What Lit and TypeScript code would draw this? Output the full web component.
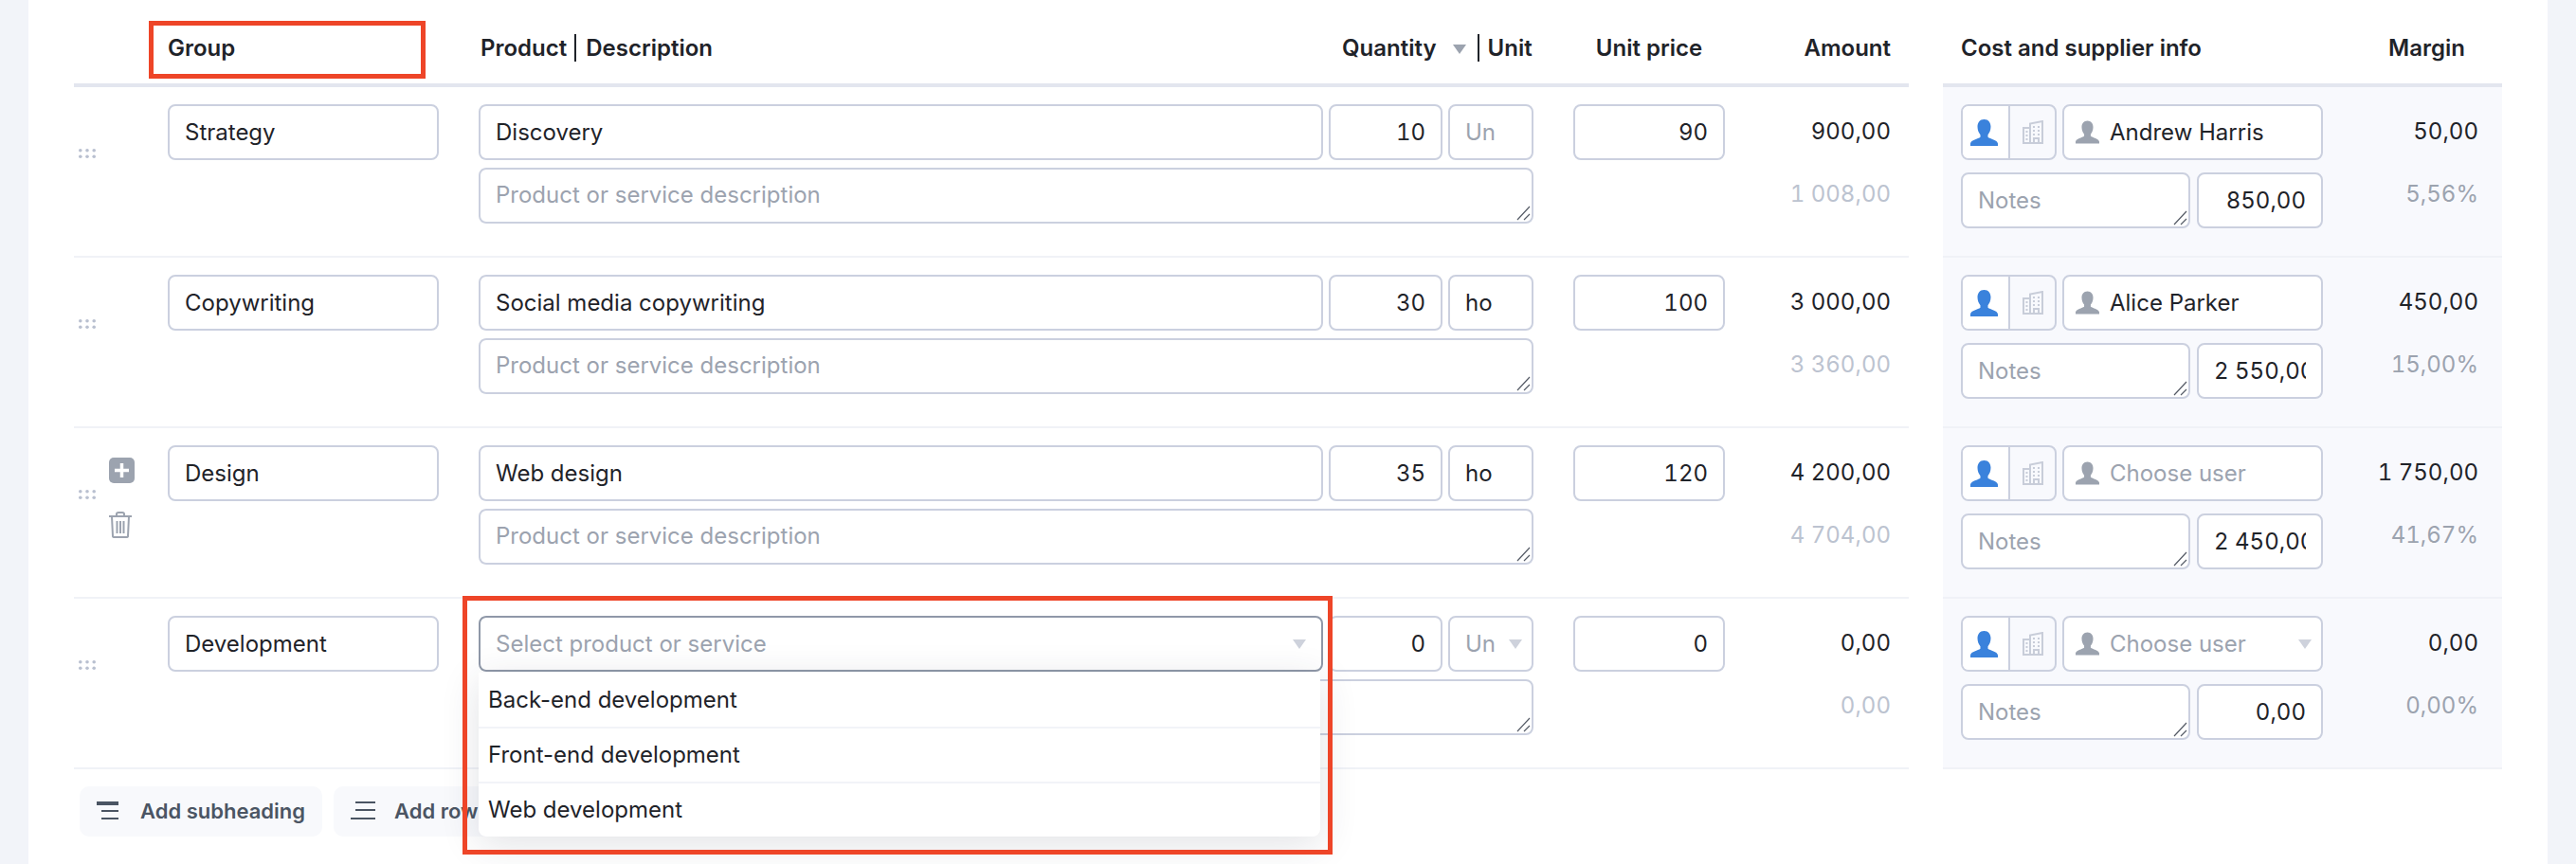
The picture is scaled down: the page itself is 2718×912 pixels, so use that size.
import { LitElement, html, css, svg } from "lit";
import { customElement } from "lit/decorators.js";
import { classMap } from "lit/directives/class-map.js";

const person = (cls: string, w: number, h: number) => html`<svg class=${cls} width=${w} height=${h} viewBox="0 0 29 28"><path fill="currentColor" d="M14.500 0c4.600 0 7 3.500 7 7.800 0 3.700-1.400 6.600-3 8.400v2.600c2.300 1.800 10 3 10.500 6.700V28H0v-2.500c.5-3.700 8.200-4.900 10.500-6.700v-2.600c-1.600-1.800-3-4.700-3-8.400 0-4.300 2.400-7.800 7-7.800z"/></svg>`;

const building = html`<svg class="bld" width="22" height="25" viewBox="0 0 22 25"><path fill="none" stroke="currentColor" stroke-width="2" d="M8 24V3.500L21 1v23zM8 8H1v16h7"/><path fill="none" stroke="currentColor" stroke-width="2" d="M11 7h2M16 7h2M11 11h2M16 11h2M11 15h2M16 15h2M3.500 12h2M3.500 16h2M3.500 20h2M12 24v-5h5v5"/></svg>`;

const resizer = html`<svg class="resizer" width="15" height="16" viewBox="0 0 15 16"><path fill="none" stroke="#555b66" stroke-width="1.200" d="M14 1 1 15M14 9 8 15"/></svg>`;

const arrow = (cls: string) => html`<svg class=${cls} width="14" height="10" viewBox="0 0 14 10"><path fill="currentColor" d="M0 0h14L7 10z"/></svg>`;

const dots = html`<svg class="dots" width="18" height="10" viewBox="0 0 18 10"><g fill="currentColor">${[1.800, 9, 16.200].map(x => [1.800, 8.200].map(y => svg`<circle cx=${x} cy=${y} r="1.800"/>`))}</g></svg>`;

interface Row {
  group: string; product: string; qty: string; unit: string; unitPh?: boolean; price: string;
  amount: string; gross: string; user: string; userPh?: boolean; cost: string; margin: string; pct: string;
  actions?: boolean; open?: boolean;
}

const ROWS: Row[] = [
  { group: "Strategy", product: "Discovery", qty: "10", unit: "Un", unitPh: true, price: "90", amount: "900,00", gross: "1 008,00", user: "Andrew Harris", cost: "850,00", margin: "50,00", pct: "5,56%" },
  { group: "Copywriting", product: "Social media copywriting", qty: "30", unit: "ho", price: "100", amount: "3 000,00", gross: "3 360,00", user: "Alice Parker", cost: "2 550,00", margin: "450,00", pct: "15,00%" },
  { group: "Design", product: "Web design", qty: "35", unit: "ho", price: "120", amount: "4 200,00", gross: "4 704,00", user: "Choose user", userPh: true, cost: "2 450,00", margin: "1 750,00", pct: "41,67%", actions: true },
  { group: "Development", product: "", qty: "0", unit: "Un", unitPh: true, price: "0", amount: "0,00", gross: "0,00", user: "Choose user", userPh: true, cost: "0,00", margin: "0,00", pct: "0,00%", open: true },
];

@customElement("app-root")
export class AppRoot extends LitElement {
  static styles = css`
    :host { display: block; width: 2718px; height: 912px; overflow: hidden; background: #f2f4f9;
      font-family: Inter, "Noto Sans", sans-serif; font-size: 24px; color: #1f2329; }
    .page { position: relative; box-sizing: border-box; width: 2658px; height: 912px; margin-left: 30px;
      padding-left: 48px; background: #fff; }
    .tables { display: flex; gap: 36px; align-items: flex-start; }
    .main { width: 1936px; }
    .side { width: 590px; }
    .head { display: flex; align-items: center; height: 76px; padding-top: 12px; border-bottom: 4px solid #e3e6ef;
      font-weight: 600; white-space: nowrap; }
    .head > div { display: flex; align-items: center; }
    .hcell-group { width: 328px; padding-left: 99px; }
    .hcell-product { width: 911px; padding-left: 2px; box-sizing: border-box; }
    .bar { width: 2px; height: 29px; background: #1f2329; margin: 0 10px 0 8px; }
    .hcell-qty { width: 202px; box-sizing: border-box; }
    .hcell-qty .arr { color: #9ca3af; margin-left: 17px; margin-top: 4px; flex: none; }
    .hcell-qty .bar { margin: 0 9px 0 12px; flex: none; }
    .hcell-price { justify-content: center; margin-left: 42px; width: 160px; }
    .hcell-amount { flex: 1; justify-content: flex-end; padding-right: 19px; }
    .hcell-cost { width: 401px; padding-left: 19px; box-sizing: border-box; }
    .hcell-margin { flex: 1; justify-content: flex-end; padding-right: 39px; }

    .row { display: grid; grid-template-columns: 99px 328px 1155px 202px 1fr; height: 178px;
      border-bottom: 2px solid #f0f2f7; }
    .drag { display: flex; align-items: flex-start; }
    .dots { color: #b9c0d0; margin: 65px 0 0 5px; flex: none; }
    .actions { display: flex; flex-direction: column; align-items: flex-start; gap: 30px; margin: 31px 0 0 14px; color: #9ca3af; }
    .actions svg { display: block; }
    .group { padding-top: 18px; }
    .fld { position: relative; box-sizing: border-box; height: 59px; border: 2px solid #cbd0df; border-radius: 8px; background: #fff;
      padding: 0 16px; display: flex; align-items: center; white-space: nowrap; }
    .fld .t { display: block; flex: 1; min-width: 0; overflow: hidden; line-height: 30px; }
    .num { text-align: right; font-variant-numeric: tabular-nums; }
    .ph { color: #9ca3af; }
    .group .fld { width: 286px; }
    .prod { padding-top: 18px; display: flex; flex-direction: column; gap: 8px; width: 1113px; }
    .prod-line { display: flex; gap: 6px; }
    .f-prod { position: relative; width: 891px; flex: none; }
    .f-prod .fld.sel { border-color: #8f98a8; }
    .f-qty { width: 120px; flex: none; }
    .f-unit { width: 90px; flex: none; }
    .sel-arrow { color: #ced2dc; flex: none; }
    .unit-arrow { color: #ced2dc; flex: none; margin-right: -6px; }
    .resizer { position: absolute; right: 1px; bottom: 1px; }
    .area { align-items: flex-start; padding-top: 12px; }
    .price { padding-top: 18px; }
    .price .fld { width: 160px; }
    .vals { display: flex; flex-direction: column; align-items: flex-end; gap: 36px; padding: 32px 19px 0 0; line-height: 30px; white-space: nowrap; font-variant-numeric: tabular-nums; }
    .light { color: #bcc3d0; }
    .muted { color: #9ca3af; }

    .sside { background: #f8f9fd; height: 178px; border-bottom: 2px solid #f0f2f7; display: flex; }
    .sgrid { width: 382px; margin: 18px 0 0 19px; display: flex; flex-direction: column; gap: 13px; flex: none; }
    .sline { display: flex; gap: 6px; }
    .toggle { display: flex; width: 101px; height: 59px; box-sizing: border-box; border: 2px solid #cbd0df; border-radius: 8px; overflow: hidden; flex: none; }
    .toggle > div { display: flex; align-items: center; justify-content: center; }
    .t-user { box-sizing: border-box; width: 50px; padding-right: 4px; background: #fff; border-right: 2px solid #cbd0df; }
    .t-bld { flex: 1; }
    .blue { color: #3a82dc; }
    .bld { color: #c8cdd9; }
    .f-user { width: 275px; padding-left: 12px; flex: none; gap: 11px; }
    .gp { color: #9ca3af; flex: none; }
    .f-notes { width: 242px; flex: none; }
    .f-cost { width: 133px; flex: none; margin-left: 1px; }
    .svals { flex: 1; padding-right: 25px; }

    .btns { display: flex; gap: 12px; margin: 18px 0 0 6px; }
    .btn { display: flex; align-items: center; box-sizing: border-box; height: 53px; background: #f8f9fc; border-radius: 10px; padding: 0 18px 2px; color: #4b5563; font-weight: 600; font-size: 22px; white-space: nowrap; }
    .btn svg { flex: none; }
    .b1 svg { margin-right: 23px; }
    .b2 svg { margin-right: 20px; }

    .dd { position: absolute; z-index: 2; left: 0; top: 60px; width: 888px; background: #fff; border-radius: 0 0 8px 8px;
      box-shadow: 0 8px 40px rgba(40, 50, 70, 0.14); }
    .dd div { display: flex; align-items: center; height: 57px; padding-left: 10px; box-sizing: border-box; }
    .dd div + div { border-top: 2px solid #f2f3f8; height: 58px; padding-bottom: 2px; }
    .mark { position: absolute; z-index: 3; box-sizing: border-box; border: 5px solid #ee4528; pointer-events: none; }
    .m1 { left: 127px; top: 22px; width: 292px; height: 61px; }
    .m2 { left: 458px; top: 629px; width: 918px; height: 273px; }
  `;

  private mainRow(r: Row) {
    return html`<div class="row">
      <div class="drag">${dots}${r.actions ? html`<div class="actions">
        <svg width="27" height="27" viewBox="0 0 27 27"><rect width="27" height="27" rx="5" fill="#9ca3af"/><path d="M13.500 6v15M6 13.500h15" stroke="#fff" stroke-width="3.500"/></svg>
        <svg width="24" height="28" viewBox="0 0 24 28"><path fill="none" stroke="currentColor" stroke-width="2" d="M0 5h24M8 5V2.500Q8 1 10 1h4q2 0 2 1.500V5M3 5l1 21q0 1 2 1h12q2 0 2-1l1-21M8.500 10v13M12 10v13M15.500 10v13"/></svg>
      </div>` : ""}</div>
      <div class="group"><div class="fld"><span class="t">${r.group}</span></div></div>
      <div class="prod">
        <div class="prod-line">
          <div class="f-prod">
            ${r.open ? html`<div class="fld sel"><span class="t ph">Select product or service</span>${arrow("sel-arrow")}</div>
              <div class="dd"><div>Back-end development</div><div>Front-end development</div><div>Web development</div></div>`
              : html`<div class="fld"><span class="t">${r.product}</span></div>`}
          </div>
          <div class="fld f-qty"><span class="t num">${r.qty}</span></div>
          <div class="fld f-unit"><span class=${classMap({ t: true, ph: !!r.unitPh })}>${r.unit}</span>${r.open ? arrow("unit-arrow") : ""}</div>
        </div>
        <div class="fld area"><span class="t ph">Product or service description</span>${resizer}</div>
      </div>
      <div class="price"><div class="fld"><span class="t num">${r.price}</span></div></div>
      <div class="vals"><div>${r.amount}</div><div class="light">${r.gross}</div></div>
    </div>`;
  }

  private sideRow(r: Row) {
    return html`<div class="sside">
      <div class="sgrid">
        <div class="sline">
          <div class="toggle"><div class="t-user">${person("blue", 29, 28)}</div><div class="t-bld">${building}</div></div>
          <div class="fld f-user">${person("gp", 25, 25)}<span class=${classMap({ t: true, ph: !!r.userPh })}>${r.user}</span>${r.open ? arrow("unit-arrow") : ""}</div>
        </div>
        <div class="sline">
          <div class="fld f-notes"><span class="t ph">Notes</span>${resizer}</div>
          <div class="fld f-cost"><span class="t num">${r.cost}</span></div>
        </div>
      </div>
      <div class="vals svals"><div>${r.margin}</div><div class="muted">${r.pct}</div></div>
    </div>`;
  }

  render() {
    return html`<div class="page">
      <div class="tables">
        <div class="main">
          <div class="head">
            <div class="hcell-group">Group</div>
            <div class="hcell-product">Product<span class="bar"></span>Description</div>
            <div class="hcell-qty">Quantity${arrow("arr")}<span class="bar"></span>Unit</div>
            <div class="hcell-price">Unit price</div>
            <div class="hcell-amount">Amount</div>
          </div>
          ${ROWS.map(r => this.mainRow(r))}
        </div>
        <div class="side">
          <div class="head">
            <div class="hcell-cost">Cost and supplier info</div>
            <div class="hcell-margin">Margin</div>
          </div>
          ${ROWS.map(r => this.sideRow(r))}
        </div>
      </div>
      <div class="btns">
        <div class="btn b1"><svg width="23" height="19" viewBox="0 0 23 19"><path fill="none" stroke="currentColor" d="M0 2h23" stroke-width="4"/><path fill="none" stroke="currentColor" stroke-width="2" d="M5 10h18M5 18h18"/></svg>Add subheading</div>
        <div class="btn b2"><svg width="26" height="19" viewBox="0 0 26 19"><path fill="none" stroke="currentColor" stroke-width="2" d="M5 1h21M5 9h21M0 18h26"/></svg>Add row</div>
      </div>
      <div class="mark m1"></div>
      <div class="mark m2"></div>
    </div>`;
  }
}
